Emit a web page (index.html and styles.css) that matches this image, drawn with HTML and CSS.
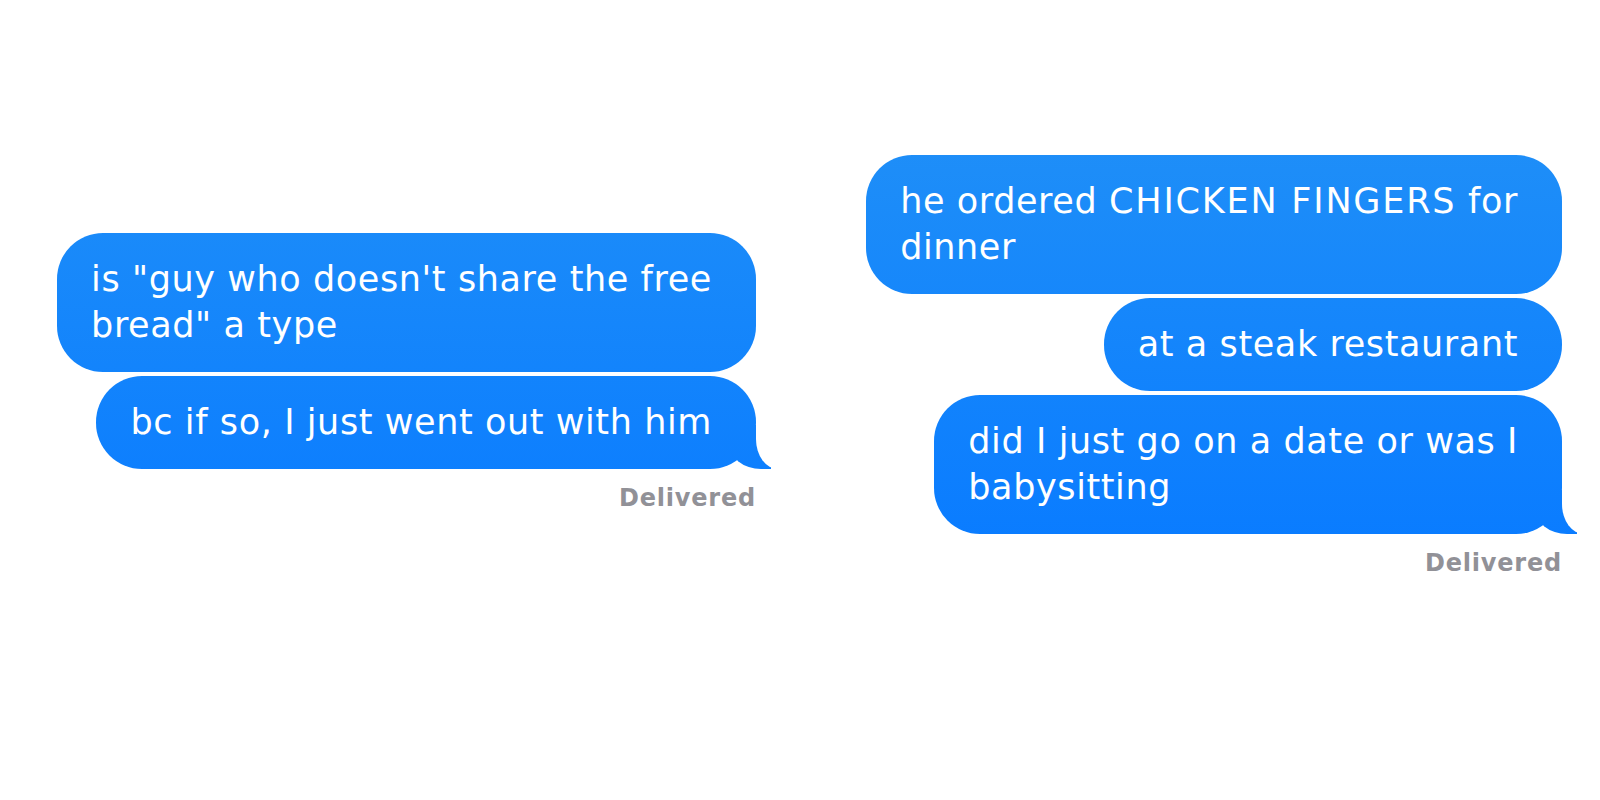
FILE: index.html
```html
<!DOCTYPE html>
<html lang="en">
<head>
  <meta charset="UTF-8" />
  <meta name="viewport" content="width=device-width, initial-scale=1.0"/>
  <title>Messages</title>
  <link rel="stylesheet" href="styles.css">
</head>
<body>

  <main class="page">
    <section class="thread thread-left">
      <div class="bubble">is "guy who doesn't share the free<br>bread" a type</div>
      <div class="bubble tail">bc if so, I just went out with him</div>
      <div class="status">Delivered</div>
    </section>

    <section class="thread thread-right">
      <div class="bubble">he ordered <span class="caps">CHICKEN FINGERS</span> for<br>dinner</div>
      <div class="bubble">at a steak restaurant</div>
      <div class="bubble tail">did I just go on a date or was I<br>babysitting</div>
      <div class="status">Delivered</div>
    </section>
  </main>

</body>
</html>
```

FILE: styles.css
```css
body {
  margin: 0;
  background: #ffffff;
  font-family: "DejaVu Sans", "Liberation Sans", Arial, sans-serif;
}

.page {
  display: flex;
  align-items: flex-start;
  height: 800px;
  padding: 0 38px 0 0;
  box-sizing: border-box;
}

.thread {
  display: flex;
  flex-direction: column;
  align-items: flex-end;
  gap: 4px;
}

.thread-left {
  width: 756px;
  margin-top: 233px;
}

.thread-right {
  margin-left: auto;
  margin-top: 155px;
}

/* one gradient over the whole screen, like the real app */
.bubble,
.bubble.tail::before {
  background: linear-gradient(to bottom, #1e8ef8 150px, #0a7cff 540px);
  background-attachment: fixed;
}

.bubble {
  position: relative;
  width: fit-content;
  padding: 23px 44px 24px 34px;
  font-size: 35px;
  line-height: 46px;
  letter-spacing: 0.6px;
  color: #ffffff;
  border-radius: 46px;
}

.caps {
  letter-spacing: 1.8px;
}

/* the little hook under the last bubble */
.bubble.tail::before {
  content: "";
  position: absolute;
  right: -15px;
  bottom: 0;
  width: 42px;
  height: 44px;
  border-bottom-left-radius: 32px 26px;
}

.bubble.tail::after {
  content: "";
  position: absolute;
  right: -52px;
  bottom: 0;
  width: 52px;
  height: 44px;
  background: #ffffff;
  border-bottom-left-radius: 22px 30px;
}

.status {
  margin-top: 10px;
  font-size: 24px;
  line-height: 30px;
  font-weight: 700;
  letter-spacing: 0.8px;
  color: #919197;
}
```
